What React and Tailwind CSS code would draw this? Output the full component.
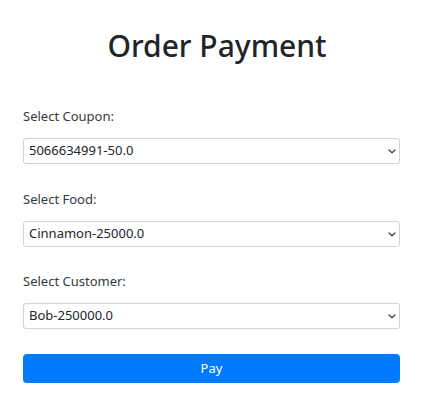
import React from "react";

const fields = [
  { label: "Select Coupon:", value: "5066634991-50.0" },
  { label: "Select Food:", value: "Cinnamon-25000.0" },
  { label: "Select Customer:", value: "Bob-250000.0" },
];

function Chevron() {
  return (
    <svg width="8" height="5" viewBox="0 0 8 5" className="absolute right-[4px] top-[11px] pointer-events-none">
      <path d="M1 1l3 2.8L7 1" fill="none" stroke="#343a40" strokeWidth="1.2" strokeLinecap="round" strokeLinejoin="round" />
    </svg>
  );
}

export default function App() {
  return (
    <div className="min-h-[420px] bg-white font-['Noto_Sans',sans-serif] text-[#212529]">
      <h1 className="pt-[28px] text-center text-[30px] leading-[36px] font-medium">Order Payment</h1>
      <form className="ml-[23px] mt-[42px] w-[377px] flex flex-col" onSubmit={(e) => e.preventDefault()}>
        {fields.map((f, i) => (
          <div key={f.label} className={i === 1 ? "mt-[25px]" : i === 2 ? "mt-[24px]" : ""}>
            <label className="block text-[13px] leading-[20px] mb-[12px] text-[#343a40]">{f.label}</label>
            <div className="relative">
              <select
                defaultValue={f.value}
                className="appearance-none block w-full h-[26px] rounded-[3px] border border-[#ced4da] bg-white pl-[5px] pr-[24px] text-[13px] text-[#212529] outline-none"
              >
                <option>{f.value}</option>
              </select>
              <Chevron />
            </div>
          </div>
        ))}
        <button type="submit" className="mt-[25px] h-[29px] w-full rounded-[4px] bg-[#007bff] text-white text-[13px]">
          Pay
        </button>
      </form>
    </div>
  );
}
